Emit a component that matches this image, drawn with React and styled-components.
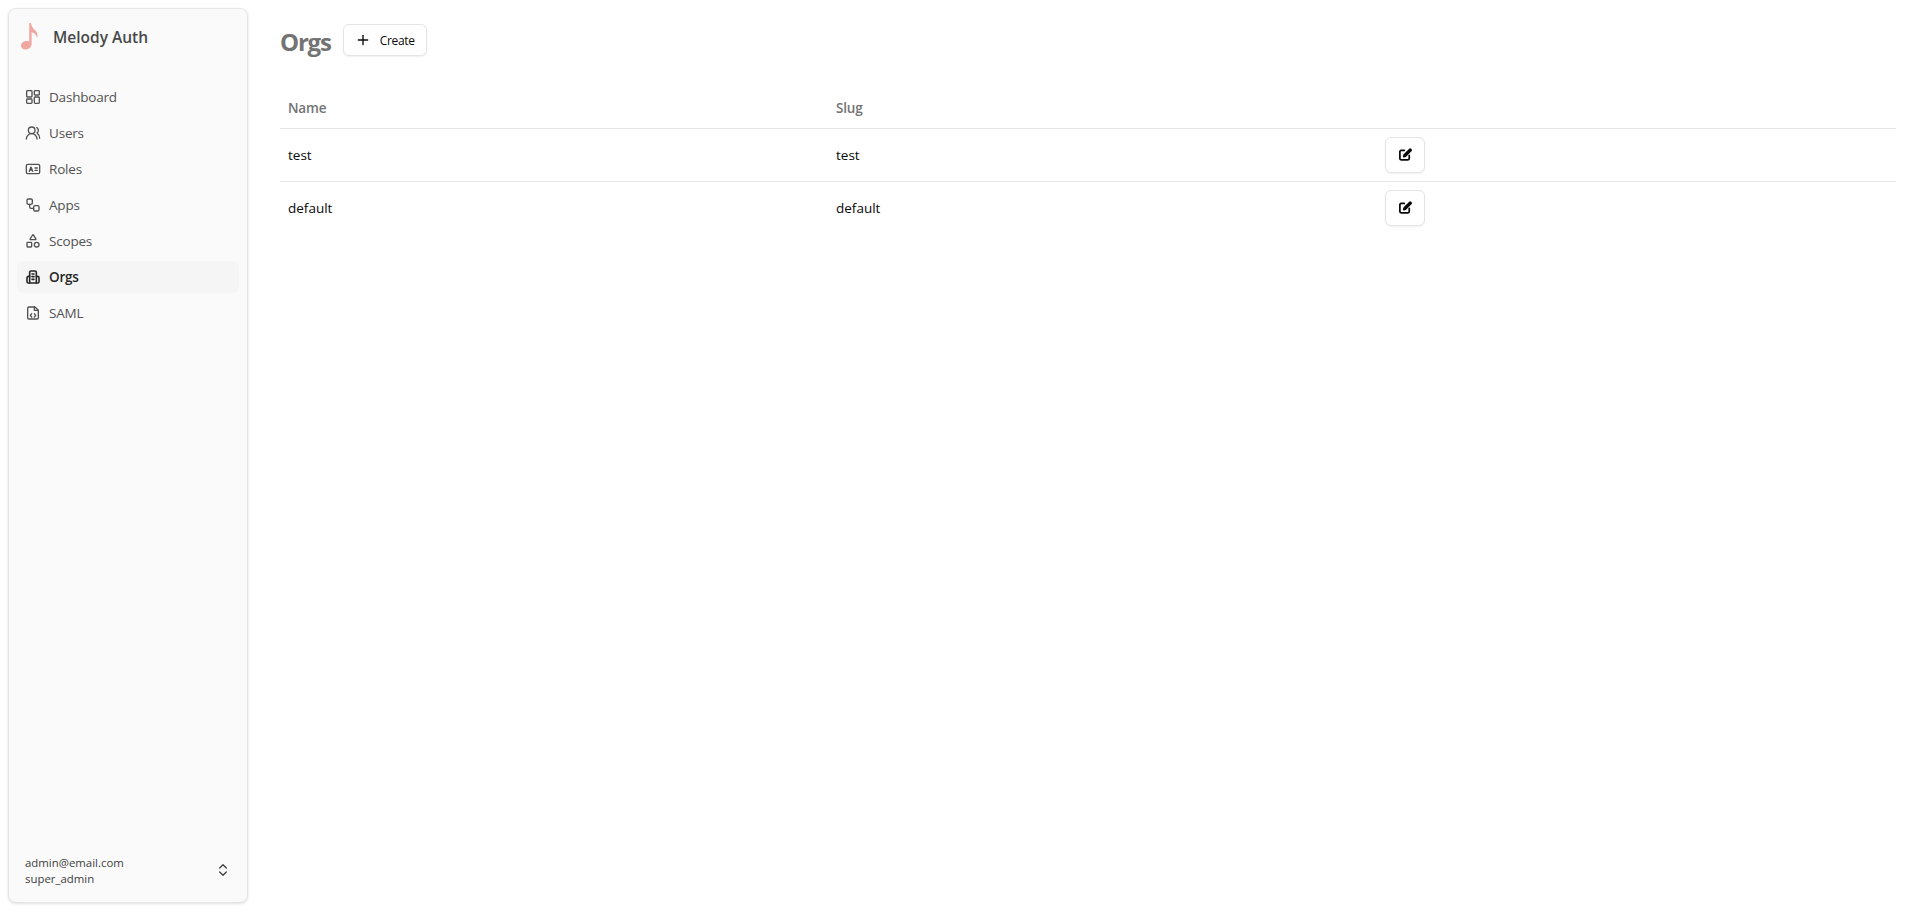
import React from 'react';
import styled, { createGlobalStyle } from 'styled-components';
import { ChevronsUpDown, Plus, Shapes, UsersRound } from 'lucide-react';

const GlobalStyle = createGlobalStyle`
  html, body {
    margin: 0;
    padding: 0;
    background: #ffffff;
    font-family: "Open Sans", "Noto Sans", sans-serif;
    color: #0a0a0a;
  }
  * { box-sizing: border-box; }
`;

const Layout = styled.div`
  display: flex;
  height: 911px;
  overflow: hidden;
`;

const SidebarWrap = styled.div`
  width: 256px;
  flex: none;
  padding: 8px;
`;

const Sidebar = styled.aside`
  height: 100%;
  display: flex;
  flex-direction: column;
  background: #fafafa;
  border: 1px solid #e5e5e5;
  border-radius: 8px;
  box-shadow: 0 1px 3px rgba(0, 0, 0, 0.12);
`;

const Brand = styled.div`
  display: flex;
  align-items: center;
  gap: 11px;
  height: 55px;
  padding: 0 0 0 9px;
  margin-bottom: 17px;
`;

const BrandName = styled.span`
  font-size: 15.5px;
  font-weight: 600;
  color: #484848;
`;

const Menu = styled.nav`
  display: flex;
  flex-direction: column;
  gap: 4px;
  padding: 0 8px;
  flex: 1;
`;

const MenuItem = styled.a`
  display: flex;
  align-items: center;
  gap: 8px;
  height: 32px;
  padding: 0 8px;
  border-radius: 6px;
  font-size: 13.5px;
  letter-spacing: -0.2px;
  font-weight: ${(p) => (p.$active ? 600 : 400)};
  color: ${(p) => (p.$active ? '#262626' : '#525252')};
  background: ${(p) => (p.$active ? '#f5f5f5' : 'transparent')};
  svg { flex: none; }
`;

const Footer = styled.div`
  display: flex;
  align-items: center;
  justify-content: space-between;
  padding: 0 16px 15px 16px;
`;

const FooterText = styled.div`
  font-size: 11.4px;
  line-height: 16px;
  color: #404040;
`;

const FooterChevron = styled(ChevronsUpDown)`
  margin-bottom: 2px;
  color: #404040;
`;

const Main = styled.main`
  flex: 1;
  min-width: 0;
  padding: 15px 24px 0;
`;

const Header = styled.header`
  display: flex;
  align-items: center;
  gap: 12px;
  height: 50px;
  margin-bottom: 23px;
`;

const Title = styled.h1`
  margin: 0;
  padding-top: 2px;
  font-size: 24px;
  font-weight: 700;
  letter-spacing: -1.2px;
  color: #737373;
`;

const Button = styled.button`
  display: inline-flex;
  align-items: center;
  justify-content: center;
  gap: 9px;
  height: ${(p) => (p.$icon ? '36px' : '32px')};
  width: ${(p) => (p.$icon ? '40px' : '84px')};
  padding: 0;
  background: #ffffff;
  border: 1px solid #e5e5e5;
  border-radius: 6px;
  box-shadow: 0 1px 2px rgba(0, 0, 0, 0.06);
  font-family: inherit;
  font-size: 12px;
  letter-spacing: -0.3px;
  font-weight: 500;
  color: #0a0a0a;
`;

const Table = styled.table`
  width: 100%;
  border-collapse: collapse;
  table-layout: fixed;
  font-size: 13.5px;
`;

const HeadCell = styled.th`
  height: 40px;
  padding: 0 8px;
  text-align: left;
  font-weight: 600;
  letter-spacing: -0.2px;
  color: #737373;
  border-bottom: 1px solid #e5e5e5;
`;

const Row = styled.tr`
  height: 53px;
  & + & td { border-top: 1px solid #e5e5e5; }
`;

const Cell = styled.td`
  padding: 0 8px;
  color: #0a0a0a;
`;

const iconProps = { width: 16, height: 16, viewBox: '0 0 24 24', fill: 'none', stroke: 'currentColor', strokeWidth: 2, strokeLinecap: 'round', strokeLinejoin: 'round' };

const DashboardIcon = () => (
  <svg {...iconProps}>
    <rect x="2.5" y="2.5" width="8" height="9.5" rx="1.2" />
    <rect x="14" y="2.5" width="7.5" height="6.5" rx="1.2" />
    <rect x="2.5" y="15" width="8" height="6.5" rx="1.2" />
    <rect x="14" y="12" width="7.5" height="9.5" rx="1.2" />
  </svg>
);

const RolesIcon = () => (
  <svg {...iconProps}>
    <rect x="2" y="5" width="20" height="14" rx="2" />
    <path d="M6.5 15.5 9 9l2.5 6.5M7.5 13.5h3M15 10.5h3.5M15 14h3.5" />
  </svg>
);

const AppsIcon = () => (
  <svg {...iconProps}>
    <rect x="3" y="3" width="8" height="8" rx="2" />
    <rect x="13" y="13" width="8" height="8" rx="2" />
    <path d="M7 11v4a2 2 0 0 0 2 2h4" />
  </svg>
);

const OrgsIcon = () => (
  <svg {...iconProps} strokeWidth={2.4}>
    <path d="M7 21V5a2 2 0 0 1 2-2h6a2 2 0 0 1 2 2v16" />
    <path d="M7 11H5a2 2 0 0 0-2 2v6a2 2 0 0 0 2 2h14a2 2 0 0 0 2-2v-6a2 2 0 0 0-2-2h-2" />
    <path d="M10.5 7.5h3M10.5 11.5h3M10.5 15.5h3" />
  </svg>
);

const SamlIcon = () => (
  <svg {...iconProps}>
    <path d="M9 3h6l5 5v11a2 2 0 0 1-2 2H6a2 2 0 0 1-2-2V5a2 2 0 0 1 2-2h3z" />
    <path d="M14 3v5h6" />
    <path d="m10 13-2 2.5 2 2.5M14 13l2 2.5-2 2.5" />
  </svg>
);

const EditIcon = () => (
  <svg width="15" height="15" viewBox="1 -0.5 24 24" fill="none" stroke="currentColor" strokeWidth="2.8" strokeLinecap="round" strokeLinejoin="round">
    <path d="M11 5H6a2 2 0 0 0-2 2v11a2 2 0 0 0 2 2h11a2 2 0 0 0 2-2v-5" />
    <path d="M19.5 3.5 11 12l-.8 2.8 2.8-.8 8.5-8.5a1.4 1.4 0 0 0-2-2z" fill="currentColor" />
  </svg>
);

const NoteLogo = () => (
  <svg width="24" height="30" viewBox="0 0 24 30">
    <path d="M11.2 1H13c.4 4 2.4 5.6 4.4 7.6 2 2 2.8 4.600 1.600 7.600-.2-3-2.400-5.200-5.400-5.900V22c0 3.300-2.800 5.400-6 5.400-2.700 0-4.600-1.500-4.600-3.700 0-2.800 2.800-4.800 5.800-4.800 1 0 1.700.2 2.400.5z" fill="#efa79f" />
  </svg>
);

const navItems = [
  { label: 'Dashboard', icon: <DashboardIcon /> },
  { label: 'Users', icon: <UsersRound size={16} /> },
  { label: 'Roles', icon: <RolesIcon /> },
  { label: 'Apps', icon: <AppsIcon /> },
  { label: 'Scopes', icon: <Shapes size={16} /> },
  { label: 'Orgs', icon: <OrgsIcon />, active: true },
  { label: 'SAML', icon: <SamlIcon /> },
];

const orgs = [
  { name: 'test', slug: 'test' },
  { name: 'default', slug: 'default' },
];

export default function App() {
  return (
    <>
      <GlobalStyle />
      <Layout>
        <SidebarWrap>
          <Sidebar>
            <Brand>
              <NoteLogo />
              <BrandName>Melody Auth</BrandName>
            </Brand>
            <Menu>
              {navItems.map((item) => (
                <MenuItem key={item.label} $active={item.active}>
                  {item.icon}
                  {item.label}
                </MenuItem>
              ))}
            </Menu>
            <Footer>
              <FooterText>
                admin@email.com
                <br />
                super_admin
              </FooterText>
              <FooterChevron size={16} />
            </Footer>
          </Sidebar>
        </SidebarWrap>
        <Main>
          <Header>
            <Title>Orgs</Title>
            <Button>
              <Plus size={16} />
              Create
            </Button>
          </Header>
          <Table>
            <colgroup>
              <col width="548" />
              <col width="549" />
              <col />
            </colgroup>
            <thead>
              <tr>
                <HeadCell>Name</HeadCell>
                <HeadCell>Slug</HeadCell>
                <HeadCell />
              </tr>
            </thead>
            <tbody>
              {orgs.map((org) => (
                <Row key={org.name}>
                  <Cell>{org.name}</Cell>
                  <Cell>{org.slug}</Cell>
                  <Cell>
                    <Button $icon>
                      <EditIcon />
                    </Button>
                  </Cell>
                </Row>
              ))}
            </tbody>
          </Table>
        </Main>
      </Layout>
    </>
  );
}
